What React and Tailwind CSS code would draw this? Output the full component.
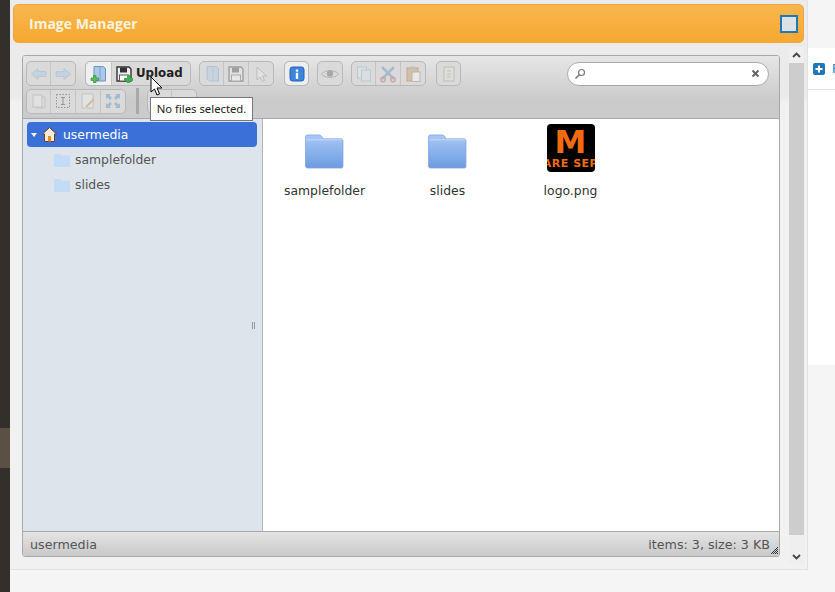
const F = { fontFamily: '"DejaVu Sans", sans-serif' };

const Ico = ({ children, dim = true }) => (
  <svg width="18" height="18" viewBox="0 0 18 18" className={dim ? "opacity-35" : ""}>{children}</svg>
);

const Back = () => <Ico><path d="M1.5 9 L8 3.5 V6.5 H16 V11.5 H8 V14.5 Z" fill="#9cc4e8" stroke="#7aa8d2" /></Ico>;
const Fwd = () => <Ico><path d="M16.5 9 L10 3.5 V6.5 H2 V11.5 H10 V14.5 Z" fill="#9cc4e8" stroke="#7aa8d2" /></Ico>;
const Book = ({ plus }) => (
  <Ico dim={!plus}>
    <path d="M4 1.5 H13 L15.5 3.5 V16 H7 L4 14 Z" fill="#a9c8ea" stroke="#6b94c0" />
    <path d="M10 2 V15.5" stroke="#7ea3ca" />
    {plus && <path d="M1 13 H3.5 V10.5 H6 V13 H8.5 V15.5 H6 V18 H3.5 V15.5 H1 Z" fill="#5cbc5c" stroke="#2f8a2f" strokeWidth="0.6" />}
  </Ico>
);
const Floppy = ({ plus }) => (
  <Ico dim={!plus}>
    <path d="M2 2 H14 L16 4 V16 H2 Z" fill="#f0f0f0" stroke="#333" strokeWidth="1.4" />
    <rect x="5" y="2.5" width="7" height="5" fill="#333" />
    <rect x="4.5" y="10" width="9" height="6" fill="#fff" stroke="#555" />
    {plus && <path d="M9 13 H12 V10 H15 V13 H18 V16 H15 V18 H12 V16 H9 Z" fill="#3fb04a" />}
  </Ico>
);
const Pointer = () => <Ico><path d="M5 2 V15 L8 12 L10.5 16.5 L12.5 15.5 L10.5 11 H14.5 Z" fill="#eee" stroke="#888" /></Ico>;
const Info = () => (
  <svg width="18" height="18" viewBox="0 0 18 18">
    <rect x="2" y="2" width="14" height="14" rx="2.5" fill="#3d84dc" stroke="#2464b4" />
    <rect x="7.8" y="4.5" width="2.4" height="2.2" fill="#fff" />
    <rect x="7.8" y="7.8" width="2.4" height="6" fill="#fff" />
  </svg>
);
const Eye = () => (
  <svg width="20" height="18" viewBox="0 0 20 18" className="opacity-60">
    <path d="M1.5 9 C5 4.5 15 4.5 18.5 9 C15 13.5 5 13.5 1.5 9 Z" fill="#ddd" stroke="#999" />
    <circle cx="10" cy="8.5" r="3.2" fill="#888" />
  </svg>
);
const Copy = () => <Ico><rect x="2.5" y="2" width="9" height="11" fill="#e6eef7" stroke="#8aa" /><rect x="6.5" y="5" width="9" height="11" fill="#dce8f4" stroke="#8aa" /></Ico>;
const Cut = () => (
  <Ico>
    <path d="M3 2 L15 14 M15 2 L3 14" stroke="#4a7fb5" strokeWidth="2.5" />
    <circle cx="4" cy="14.5" r="2.2" fill="none" stroke="#b04a3a" strokeWidth="1.4" />
    <circle cx="14" cy="14.5" r="2.2" fill="none" stroke="#b04a3a" strokeWidth="1.4" />
  </Ico>
);
const Paste = () => <Ico dim={false}><g opacity="0.55"><rect x="3" y="3" width="11" height="13" fill="#d7a878" stroke="#b08050" /><rect x="6" y="1.5" width="5" height="3" fill="#aaa" /><rect x="8" y="7" width="8" height="9.5" fill="#f6f6f6" stroke="#999" /></g></Ico>;
const Extract = () => <Ico><rect x="4" y="2" width="10" height="14" fill="#e8e8d8" stroke="#888" /><path d="M7 6 H11 M7 9 H11 M7 12 H11" stroke="#888" /></Ico>;
const DupIco = () => <Ico><rect x="3" y="3" width="9" height="12" fill="#eee" stroke="#999" /><path d="M12 5 H15 V16 H6 V15" fill="none" stroke="#999" /></Ico>;
const Rename = () => (
  <svg width="18" height="18" viewBox="0 0 18 18" className="opacity-60">
    <rect x="2.5" y="2.5" width="13" height="13" fill="none" stroke="#666" strokeDasharray="1.5 1.5" />
    <path d="M7 5.5 H11 M9 5.5 V12.5 M7 12.5 H11" stroke="#666" />
  </svg>
);
const Edit = () => <Ico><rect x="3" y="2" width="11" height="14" fill="#f2f2f2" stroke="#999" /><path d="M7 15 L15 7" stroke="#b78a3a" strokeWidth="2" /></Ico>;
const Resize = () => <Ico dim={false}><g opacity="0.45" fill="#5f94c8"><path d="M2 2 H7 L5.5 3.5 L8 6 L6 8 L3.5 5.5 L2 7 Z" /><path d="M16 2 V7 L14.5 5.5 L12 8 L10 6 L12.5 3.5 L11 2 Z" /><path d="M2 16 V11 L3.5 12.5 L6 10 L8 12 L5.5 14.5 L7 16 Z" /><path d="M16 16 H11 L12.5 14.5 L10 12 L12 10 L14.5 12.5 L16 11 Z" /></g></Ico>;

const Group = ({ children }) => (
  <div className="flex h-[25px] rounded-[5px] border border-[#b8b8b8] bg-[#dadada]">{children}</div>
);
const Btn = ({ children, first, w, cls = "" }) => (
  <div className={`flex h-full ${w || (first ? "w-[23px]" : "w-[25px]")} items-center justify-center ${first ? "" : "border-l border-[#c4c4c4]"} ${cls}`}>
    {children}
  </div>
);

const BigFolder = ({ id }) => (
  <svg className="mr-[1px] mt-[6px]" width="40" height="35" viewBox="0 0 40 36">
    <defs>
      <linearGradient id={id} x1="0" y1="0" x2="0" y2="1">
        <stop offset="0" stopColor="#a8c8f6" />
        <stop offset="1" stopColor="#6e9be0" />
      </linearGradient>
    </defs>
    <path d="M1 3 Q1 1 3 1 H15 Q17 1 18 3 L19 5 H38 Q39.5 5 39.5 7 V33 Q39.5 35 38 35 H3 Q1 35 1 33 Z" fill={`url(#${id})`} stroke="#7ea4dc" strokeWidth="0.8" />
    <path d="M1.5 6 H39" stroke="#c7dcf8" />
  </svg>
);
const SmallFolder = () => (
  <svg width="16" height="14" viewBox="0 0 16 14">
    <path d="M0 1 H6 L7.5 2.5 H16 V14 H0 Z" fill="#c3dbf5" />
  </svg>
);
const Home = () => (
  <svg width="15" height="15" viewBox="0 0 15 15">
    <path d="M7.5 0.5 L14.5 7 H12.5 V14.5 H2.5 V7 H0.5 Z" fill="#f5ecd8" stroke="#7a3b25" />
    <rect x="6" y="9" width="3" height="5.5" fill="#e08a2a" />
  </svg>
);
const Cell = ({ label, children }) => (
  <div className="flex w-[123px] flex-col items-center">
    <div className="flex h-[48px] w-[48px] items-center justify-center">{children}</div>
    <div className="mt-[11px] text-[12.4px] leading-[16px] text-[#333]">{label}</div>
  </div>
);

export default function App() {
  return (
    <div className="relative flex h-[592px] w-[835px] overflow-hidden bg-[#f5f5f5]" style={F}>
      {/* dark page strip */}
      <div className="flex w-[10px] shrink-0 flex-col bg-[#332f2a]">
        <div className="mt-[428px] h-[40px] bg-[#5a5044]" />
      </div>

      {/* dialog */}
      <div className="flex h-[570px] w-[798px] shrink-0 flex-col border-b border-r border-[#e2e2e2] bg-gradient-to-b from-[#ebebeb] from-[17%] to-[#f1f1f1] to-[18%] px-[3px] pt-[4px]">
        <div className="flex h-[39px] w-[791px] shrink-0 items-center justify-between rounded-[5px] border border-[#f0a63a] bg-gradient-to-b from-[#f8b64e] to-[#f6a830] pl-[15px] pr-[5px]">
          <span className="text-[14px] font-bold text-[#fff3dd]" style={{ fontFamily: '"Open Sans", sans-serif' }}>Image Manager</span>
          <div className="h-[18px] w-[18px] border-2 border-[#2277b8] bg-[#dbe3e6]" />
        </div>

        <div className="flex items-start pl-[9px]">
          {/* elfinder */}
          <div className="mt-[12px] flex h-[502px] w-[758px] shrink-0 flex-col overflow-hidden rounded-[3px] border border-[#a8a8a8] bg-white">
            <div className="h-[63px] shrink-0 border-b border-[#a8a8a8] bg-gradient-to-b from-[#e6e6e6] to-[#cbcbcb] to-70% px-[3px] pt-[5px]">
              <div className="flex h-[25px] items-center">
                <Group><Btn first><Back /></Btn><Btn><Fwd /></Btn></Group>
                <div className="ml-[9px]">
                  <Group>
                    <Btn first w="w-[25px]" cls="bg-[#f0f0f0] rounded-l-[5px]"><Book plus /></Btn>
                    <Btn w="w-[79px]" cls="gap-[3px] pl-[3px] justify-start"><Floppy plus /><span className="text-[11.8px] font-bold text-[#222]">Upload</span></Btn>
                  </Group>
                </div>
                <div className="ml-[8px]"><Group><Btn first><Book /></Btn><Btn><Floppy /></Btn><Btn><Pointer /></Btn></Group></div>
                <div className="ml-[10px]"><Group><Btn first cls="rounded-[5px] bg-[#eeeeee]"><Info /></Btn></Group></div>
                <div className="ml-[8px]"><Group><Btn first w="w-[24px]"><Eye /></Btn></Group></div>
                <div className="ml-[8px]"><Group><Btn first><Copy /></Btn><Btn><Cut /></Btn><Btn><Paste /></Btn></Group></div>
                <div className="ml-[10px]"><Group><Btn first><Extract /></Btn></Group></div>
                <div className="ml-[106px] flex h-[24px] w-[202px] items-center justify-between rounded-full border border-[#aaaaaa] bg-white pl-[6px] pr-[8px]">
                  <svg width="12" height="12" viewBox="0 0 12 12">
                    <circle cx="7.5" cy="4.5" r="3" fill="none" stroke="#777" strokeWidth="1.2" />
                    <path d="M5 7 L1.5 10.5" stroke="#777" strokeWidth="1.6" />
                  </svg>
                  <svg width="9" height="9" viewBox="0 0 9 9"><path d="M1.5 1.5 L7.5 7.5 M7.5 1.5 L1.5 7.5" stroke="#666" strokeWidth="2" /></svg>
                </div>
              </div>
              <div className="mt-[2px] flex h-[26px] items-center">
                <Group><Btn first><DupIco /></Btn><Btn><Rename /></Btn><Btn><Edit /></Btn><Btn><Resize /></Btn></Group>
                <div className="ml-[10px] mr-[8px] h-[26px] w-[3px] bg-[#a9a9a9]" />
                <Group><Btn first /><Btn /></Group>
              </div>
            </div>

            <div className="flex min-h-0 flex-1">
              <div className="relative w-[240px] shrink-0 border-r border-[#b5b5b5] bg-[#dde4ec] pl-[4px] pr-[4px] pt-[3px]">
                <div className="flex h-[25px] w-[230px] items-center rounded-[4px] bg-[#3a70d8] pl-[4px] text-[12.4px] text-white">
                  <span className="h-0 w-0 border-x-[3.5px] border-t-[4px] border-x-transparent border-t-white" />
                  <span className="ml-[5px] flex"><Home /></span>
                  <span className="ml-[6px] mt-[2px]">usermedia</span>
                </div>
                <div className="flex h-[25px] items-center pl-[27px] text-[12.4px] text-[#555]"><SmallFolder /><span className="ml-[5px] mt-[1px]">samplefolder</span></div>
                <div className="flex h-[25px] items-center pl-[27px] text-[12.4px] text-[#555]"><SmallFolder /><span className="ml-[5px] mt-[1px]">slides</span></div>
                <div className="absolute right-[7px] top-[203px] h-[7px] w-[3px] border-x border-[#999]" />
              </div>
              <div className="flex flex-1 items-start bg-white pt-[5px]">
                <Cell label="samplefolder"><BigFolder id="fa" /></Cell>
                <Cell label="slides"><BigFolder id="fb" /></Cell>
                <Cell label="logo.png">
                  <div className="flex h-[48px] w-[48px] flex-col items-center overflow-hidden rounded-[4px] bg-black">
                    <span className="mt-[5px] text-[32px] font-bold leading-[26px] text-[#f26a10]">M</span>
                    <span className="mt-[4px] whitespace-nowrap text-[11px] font-bold leading-[10px] tracking-[0.5px] text-[#f26a10]">ARE SEP</span>
                  </div>
                </Cell>
              </div>
            </div>

            <div className="relative flex h-[25px] shrink-0 items-center justify-between border-t border-[#a8a8a8] bg-gradient-to-b from-[#e4e4e4] to-[#c9c9c9] pl-[7px] pr-[9px] pt-[1px] text-[12.7px] text-[#555]">
              <span>usermedia</span>
              <span>items: 3, size: 3 KB</span>
              <svg className="absolute bottom-[1px] right-0" width="9" height="9" viewBox="0 0 9 9">
                <path d="M1 8 L8 1 M3 8 L8 3 M5 8 L8 5 M7 8 L8 7" stroke="#333" />
              </svg>
            </div>
          </div>

          {/* dialog scrollbar */}
          <div className="ml-[9px] mt-[4px] flex h-[518px] w-[15px] shrink-0 flex-col bg-[#efefef]">
            <div className="flex h-[16px] items-center justify-center">
              <svg width="9" height="6" viewBox="0 0 9 6"><path d="M1 5 L4.5 1.5 L8 5" fill="none" stroke="#444" strokeWidth="1.8" /></svg>
            </div>
            <div className="h-[472px] bg-[#cdcdcd]" />
            <div className="flex flex-1 items-center justify-center pt-[14px]">
              <svg width="9" height="6" viewBox="0 0 9 6"><path d="M1 1 L4.5 4.5 L8 1" fill="none" stroke="#444" strokeWidth="1.8" /></svg>
            </div>
          </div>
        </div>
      </div>

      {/* page behind, right */}
      <div className="mt-[48px] h-[317px] flex-1 bg-white pt-[15px]">
        <div className="flex items-center pl-[5px]">
          <div className="flex h-[12px] w-[12px] shrink-0 items-center justify-center rounded-[2px] bg-[#2277b8]">
            <svg width="8" height="8" viewBox="0 0 8 8"><path d="M4 0.5 V7.5 M0.5 4 H7.5" stroke="#fff" strokeWidth="2" /></svg>
          </div>
          <span className="ml-[7px] text-[12px] leading-[12px] text-[#2277b8]">F</span>
        </div>
        <div className="mt-[14px] h-px bg-[#e5e5e5]" />
      </div>

      {/* tooltip over toolbar */}
      <div className="absolute left-[150px] top-[97px] flex h-[24px] w-[103px] items-center justify-center whitespace-nowrap border border-[#777] bg-white text-[11.3px] text-[#222]" style={{ fontFamily: '"Noto Sans", sans-serif' }}>
        No files selected.
      </div>
      {/* mouse pointer */}
      <svg className="absolute left-[150px] top-[76px]" width="14" height="21" viewBox="0 0 14 21">
        <path d="M1 1 V16 L4.5 13 L7 19 L9.5 18 L7 12 H12 Z" fill="#fff" stroke="#000" />
      </svg>
    </div>
  );
}
